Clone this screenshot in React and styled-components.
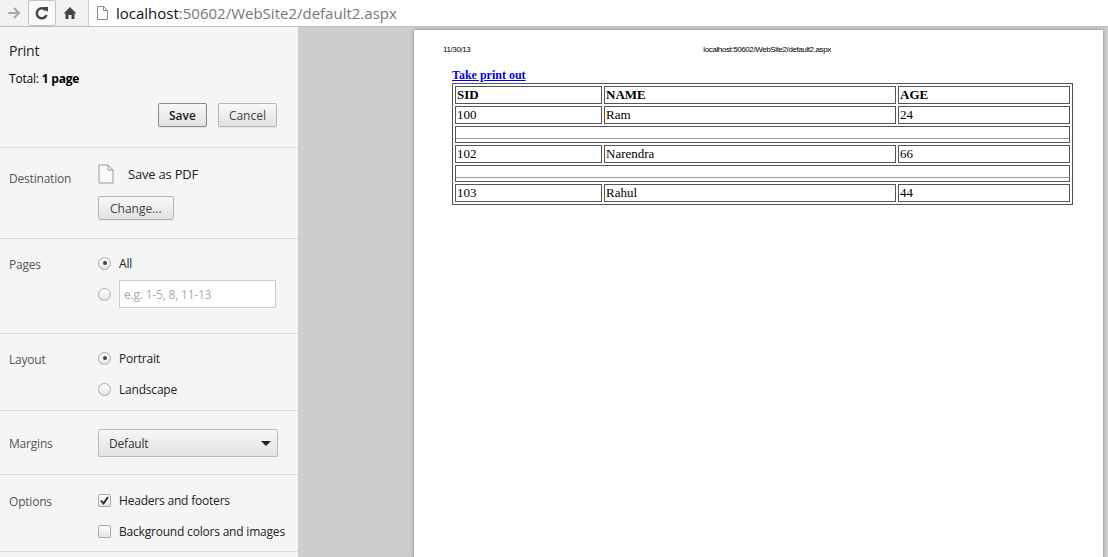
import React from 'react';
import styled, { createGlobalStyle } from 'styled-components';

const Global = createGlobalStyle`
  html, body { margin: 0; height: 100%; overflow: hidden; }
  body { font-family: "Open Sans", "Liberation Sans", sans-serif; }
`;

const Shell = styled.div`
  width: 1108px;
  height: 557px;
  display: flex;
  flex-direction: column;
`;

const Toolbar = styled.div`
  height: 26px;
  display: flex;
  align-items: center;
  background: #f2f2f2;
  border-bottom: 1px solid #bfbfbf;
`;

const NavBtn = styled.div`
  width: ${p => p.w || 26}px;
  height: 24px;
  display: flex;
  align-items: center;
  justify-content: center;
  border: 1px solid ${p => (p.framed ? '#c4c4c4' : 'transparent')};
  border-radius: 2px;
  background: ${p => (p.framed ? '#fafafa' : 'transparent')};
`;

const Omnibox = styled.div`
  flex: 1;
  height: 26px;
  margin-left: 4px;
  background: #fff;
  border-left: 1px solid #ccc;
  display: flex;
  align-items: center;
  gap: 8px;
  padding-left: 8px;
  font-size: 15px;
  color: #777;
  b { font-weight: normal; color: #111; }
`;

const Body = styled.div`
  flex: 1;
  display: flex;
  min-height: 0;
`;

const Sidebar = styled.div`
  width: 298px;
  background: #f5f5f5;
  border-right: 1px solid #d0d0d0;
  font-size: 12px;
  letter-spacing: -0.2px;
  color: #333;
`;

const Header = styled.div`
  height: 121px;
  box-sizing: border-box;
  padding: 14px 21px 0 9px;
  border-bottom: 1px solid #ddd;
`;

const Title = styled.div`
  font-size: 14px;
  color: #222;
`;

const Total = styled.div`
  margin-top: 10px;
  font-size: 12px;
  color: #000;
`;

const Buttons = styled.div`
  display: flex;
  justify-content: flex-end;
  gap: 11px;
  margin-top: 16px;
`;

const Btn = styled.button`
  height: 24px;
  padding: 0 ${p => p.pad || 10}px;
  font-family: inherit;
  font-size: 12px;
  font-weight: ${p => (p.primary ? 600 : 400)};
  color: ${p => (p.primary ? '#222' : '#444')};
  border: 1px solid ${p => (p.primary ? '#8a8a8a' : '#b5b5b5')};
  border-radius: 2px;
  background: linear-gradient(#f8f8f8, #e2e2e2);
  box-shadow: 0 1px 0 rgba(0,0,0,0.06);
`;

const Section = styled.div`
  height: ${p => p.h}px;
  box-sizing: border-box;
  display: flex;
  border-bottom: 1px solid #ddd;
  padding-top: ${p => p.pt || 14}px;
`;

const Label = styled.div`
  width: 98px;
  padding-left: 9px;
  box-sizing: border-box;
  color: #555;
  padding-top: ${p => p.pt || 8}px;
`;

const Controls = styled.div`
  flex: 1;
  display: flex;
  flex-direction: column;
  align-items: flex-start;
  gap: ${p => p.gap || 10}px;
`;

const Row = styled.div`
  display: flex;
  align-items: center;
  gap: 8px;
  height: ${p => p.h || 20}px;
  color: #222;
`;

const Radio = styled.span`
  width: 11px;
  height: 11px;
  border-radius: 50%;
  border: 1px solid #aaa;
  background: linear-gradient(#fff, #e4e4e4);
  display: inline-flex;
  align-items: center;
  justify-content: center;
  &::after {
    content: '';
    width: 4px;
    height: 4px;
    border-radius: 50%;
    background: ${p => (p.on ? '#444' : 'transparent')};
  }
`;

const Check = styled.span`
  width: 11px;
  height: 11px;
  border: 1px solid #aaa;
  border-radius: 2px;
  background: linear-gradient(#fff, #e4e4e4);
  display: inline-flex;
  align-items: center;
  justify-content: center;
`;

const TextInput = styled.div`
  width: 157px;
  height: 28px;
  box-sizing: border-box;
  border: 1px solid #ccc;
  background: #fff;
  color: #aaa;
  padding: 5px 4px;
`;

const Select = styled.div`
  width: 180px;
  height: 28px;
  box-sizing: border-box;
  border: 1px solid #bbb;
  border-radius: 2px;
  background: linear-gradient(#f6f6f6, #e3e3e3);
  display: flex;
  align-items: center;
  justify-content: space-between;
  padding: 0 6px 0 10px;
  color: #333;
  &::after {
    content: '';
    border-left: 5px solid transparent;
    border-right: 5px solid transparent;
    border-top: 5px solid #222;
  }
`;

const Preview = styled.div`
  flex: 1;
  background: #cdcdcd;
  padding: 3px 5px 0 115px;
  display: flex;
`;

const Page = styled.div`
  flex: 1;
  background: #fff;
  box-shadow: 0 0 3px rgba(0,0,0,0.45);
  padding: 15px 30px 0 29px;
  font-family: "Liberation Serif", serif;
`;

const PageHead = styled.div`
  display: flex;
  font-family: "Liberation Sans", sans-serif;
  font-size: 8px;
  letter-spacing: -0.4px;
  color: #000;
  span:last-child { margin-left: 233px; }
`;

const Content = styled.div`
  padding-left: 9px;
  margin-top: 11px;
`;

const Link = styled.a`
  font-weight: bold;
  font-size: 12px;
  color: #0000ee;
  text-decoration: underline;
`;

const Table = styled.table`
  width: 621px;
  border: 1px solid #555;
  border-spacing: 2px;
  font-size: 13px;
  color: #000;
  td, th {
    border: 1px solid #555;
    height: 15px;
    padding: 0 1px;
    text-align: left;
  }
  td.empty { padding: 0; }
`;

const Rule = styled.div`
  height: 7px;
  border-bottom: 1px solid #999;
`;

const Doc = () => (
  <svg width="16" height="20" viewBox="0 0 16 20">
    <path d="M1 1h9l5 5v13H1z" fill="#fafafa" stroke="#999" />
    <path d="M10 1v5h5" fill="none" stroke="#999" />
  </svg>
);

export default function App() {
  const rows = [['100', 'Ram', '24'], null, ['102', 'Narendra', '66'], null, ['103', 'Rahul', '44']];
  return (
    <Shell>
      <Global />
      <Toolbar>
        <NavBtn>
          <svg width="14" height="12" viewBox="0 0 14 12"><path d="M1 6h11M7 1l5 5-5 5" fill="none" stroke="#aaa" strokeWidth="2" /></svg>
        </NavBtn>
        <NavBtn framed>
          <svg width="14" height="14" viewBox="0 0 14 14"><path d="M11 4.5A5 5 0 1 0 11.5 9" fill="none" stroke="#444" strokeWidth="2.4" /><path d="M8 1h5v5z" fill="#444" /></svg>
        </NavBtn>
        <NavBtn>
          <svg width="14" height="14" viewBox="0 0 14 14"><path d="M7 1L0.5 7.5H2.5V13H5.5V9H8.5V13H11.5V7.5H13.5z" fill="#444" /></svg>
        </NavBtn>
        <Omnibox>
          <svg width="11" height="14" viewBox="0 0 11 14"><path d="M.5.5h6l4 4v9H.5z" fill="#fff" stroke="#888" /><path d="M6.5.5v4h4" fill="none" stroke="#888" /></svg>
          <span><b>localhost</b>:50602/WebSite2/default2.aspx</span>
        </Omnibox>
      </Toolbar>
      <Body>
        <Sidebar>
          <Header>
            <Title>Print</Title>
            <Total>Total: <strong>1 page</strong></Total>
            <Buttons>
              <Btn primary pad={10}>Save</Btn>
              <Btn pad={10}>Cancel</Btn>
            </Buttons>
          </Header>
          <Section h={91} pt={14}>
            <Label pt={8}>Destination</Label>
            <Controls gap={10}>
              <Row h={24} style={{ gap: 14 }}><Doc /><span style={{ fontSize: 13 }}>Save as PDF</span></Row>
              <Btn pad={11}>Change...</Btn>
            </Controls>
          </Section>
          <Section h={95} pt={15}>
            <Label pt={2}>Pages</Label>
            <Controls gap={8}>
              <Row h={18}><Radio on />All</Row>
              <Row h={28}><Radio /><TextInput>e.g. 1-5, 8, 11-13</TextInput></Row>
            </Controls>
          </Section>
          <Section h={77} pt={15}>
            <Label pt={2}>Layout</Label>
            <Controls gap={13}>
              <Row h={18}><Radio on />Portrait</Row>
              <Row h={18}><Radio />Landscape</Row>
            </Controls>
          </Section>
          <Section h={64} pt={18}>
            <Label pt={6}>Margins</Label>
            <Controls><Select>Default</Select></Controls>
          </Section>
          <Section h={77} pt={16}>
            <Label pt={2}>Options</Label>
            <Controls gap={13}>
              <Row h={18}>
                <Check>
                  <svg width="9" height="9" viewBox="0 0 9 9"><path d="M1 4.5l2.5 3L8 1" fill="none" stroke="#222" strokeWidth="1.8" /></svg>
                </Check>
                Headers and footers
              </Row>
              <Row h={18}><Check />Background colors and images</Row>
            </Controls>
          </Section>
        </Sidebar>
        <Preview>
          <Page>
            <PageHead><span>11/30/13</span><span>localhost:50602/WebSite2/default2.aspx</span></PageHead>
            <Content>
              <Link>Take print out</Link>
              <Table>
                <thead>
                  <tr><th style={{ width: 143 }}>SID</th><th style={{ width: 288 }}>NAME</th><th>AGE</th></tr>
                </thead>
                <tbody>
                  {rows.map((r, i) =>
                    r ? (
                      <tr key={i}>{r.map(c => <td key={c}>{c}</td>)}</tr>
                    ) : (
                      <tr key={i}><td colSpan={3} className="empty"><Rule /></td></tr>
                    )
                  )}
                </tbody>
              </Table>
            </Content>
          </Page>
        </Preview>
      </Body>
    </Shell>
  );
}
